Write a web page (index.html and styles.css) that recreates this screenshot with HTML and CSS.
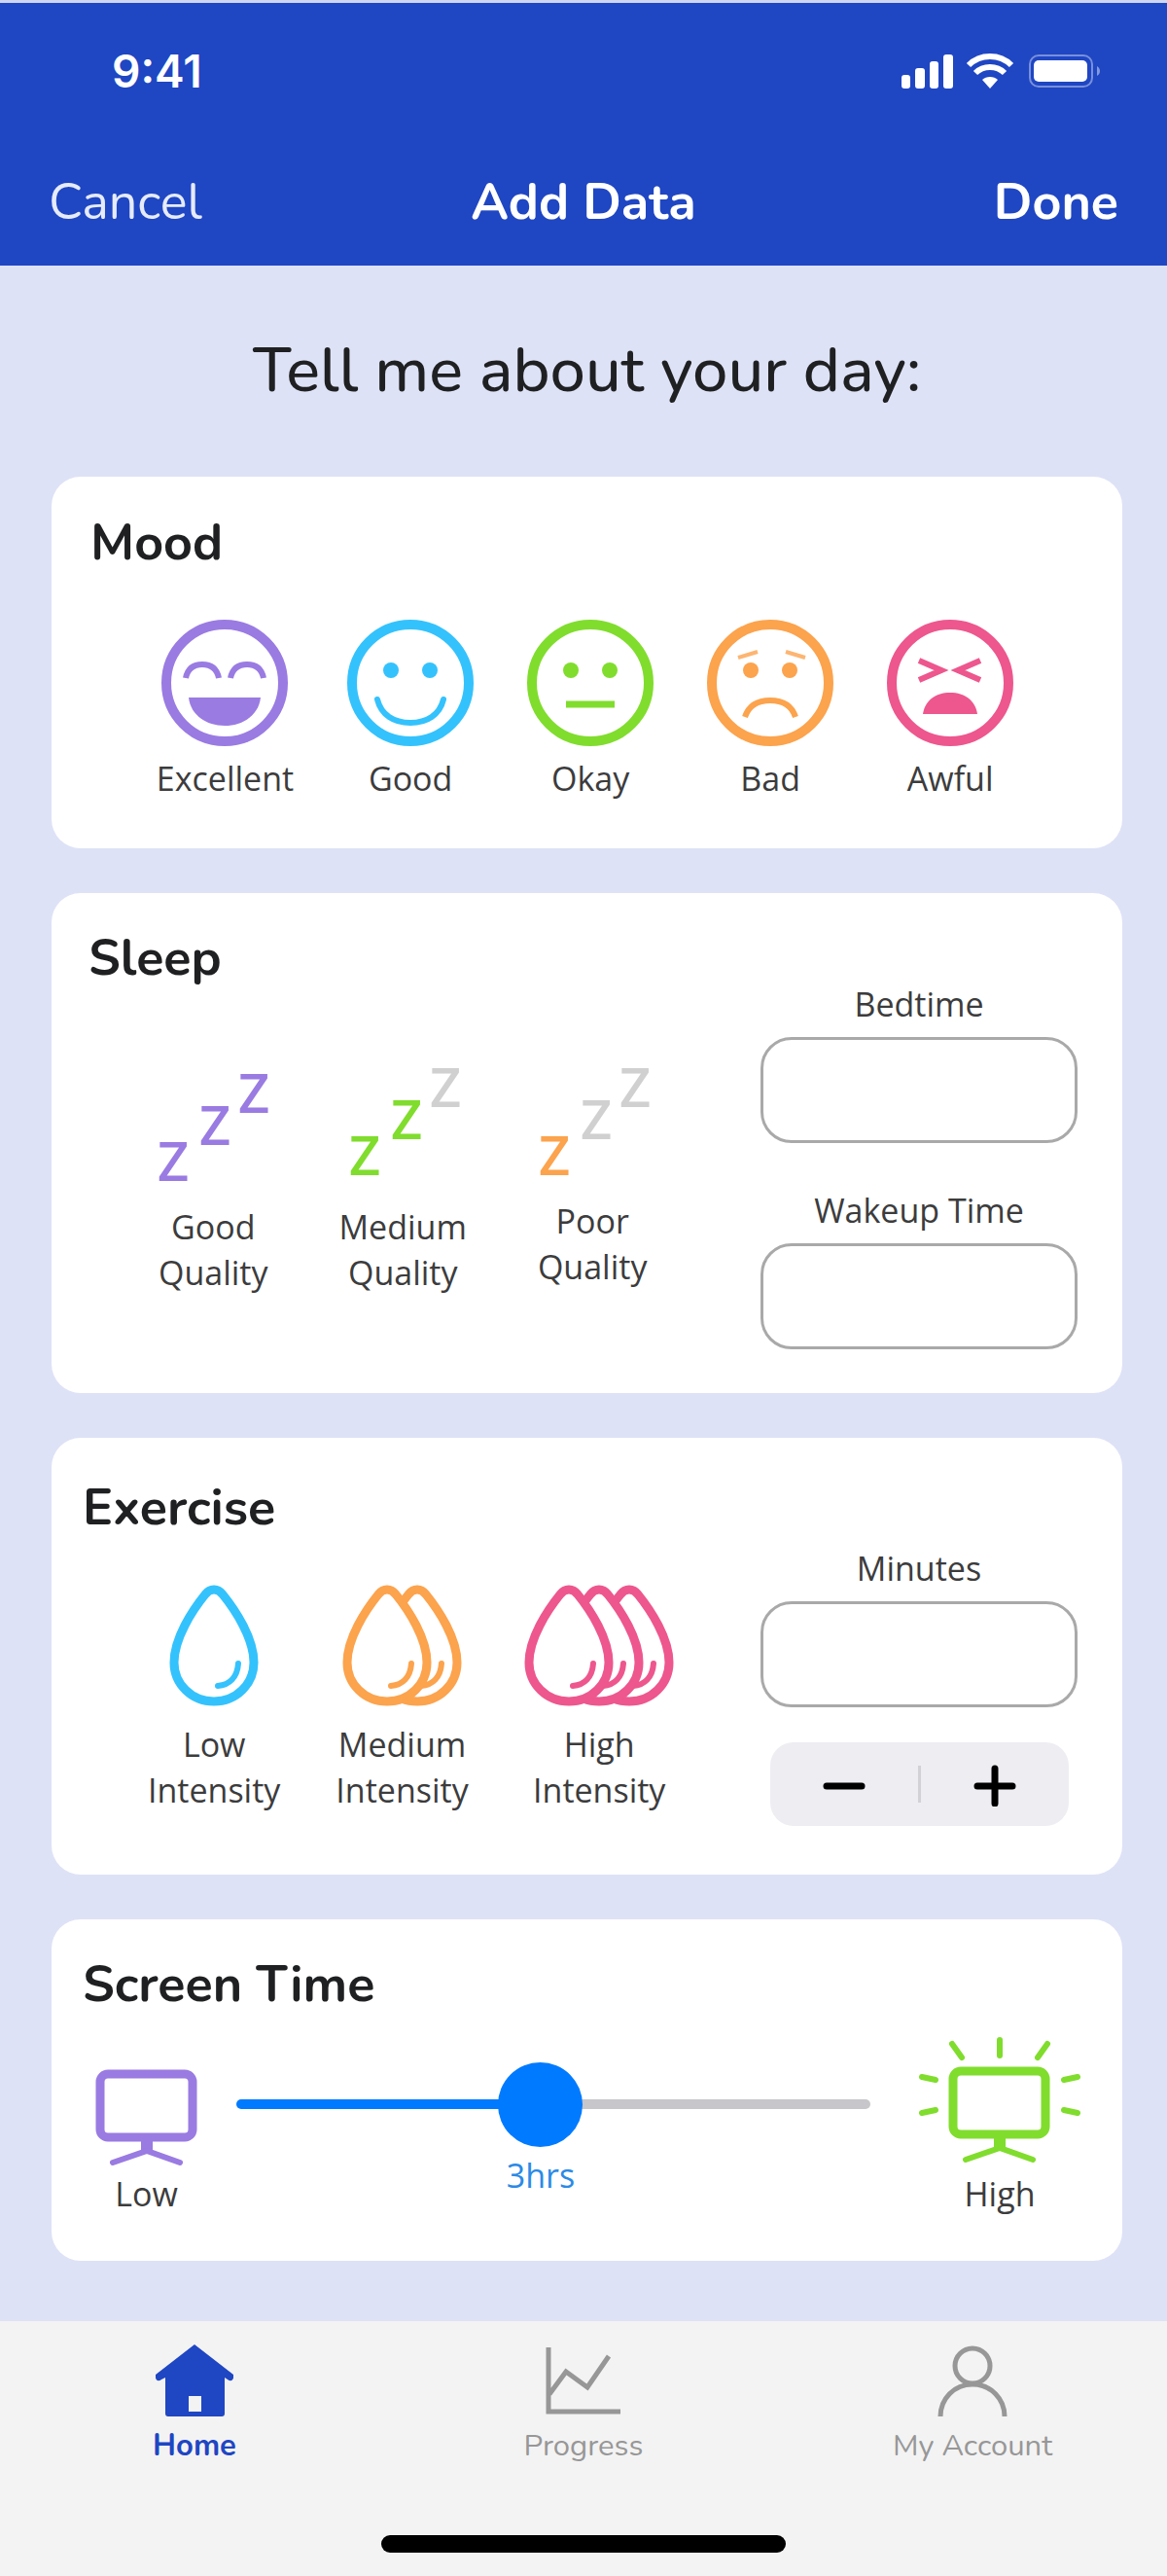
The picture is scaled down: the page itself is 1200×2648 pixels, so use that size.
FILE: index.html
```html
<!DOCTYPE html>
<html lang="en">
<head>
<meta charset="utf-8">
<meta name="viewport" content="width=device-width, initial-scale=1">
<title>Add Data</title>
<link rel="stylesheet" href="styles.css">
</head>
<body>
<svg class="defs" width="0" height="0" aria-hidden="true">
  <symbol id="drop" viewBox="0 0 92 125" overflow="visible">
    <path d="M46 5C43 5 40 6 37 10C24 26 5 55 5 80C5 102 23 120 46 120C69 120 87 102 87 80C87 55 68 26 55 10C52 6 49 5 46 5Z" fill="#fff" stroke="currentColor" stroke-width="9"/>
    <path d="M71 81C70 95 62 103 50 104" fill="none" stroke="currentColor" stroke-width="6" stroke-linecap="round"/>
  </symbol>
  <symbol id="monitor" viewBox="0 0 105 100">
    <rect x="5" y="5" width="95" height="65" rx="8" fill="none" stroke="currentColor" stroke-width="9"/>
    <path d="M53 72V86" stroke="currentColor" stroke-width="12"/>
    <path d="M18 96L53 84L87 96" fill="none" stroke="currentColor" stroke-width="6" stroke-linecap="round"/>
  </symbol>
</svg>

<header class="top">
  <div class="status">
    <span class="clock">9:41</span>
    <svg class="status-icons" width="206" height="40" viewBox="0 0 206 40" aria-hidden="true">
      <g fill="#fff">
        <rect x="1" y="24" width="9" height="14" rx="3"/>
        <rect x="15" y="17" width="10" height="21" rx="3"/>
        <rect x="30" y="10" width="9" height="28" rx="3"/>
        <rect x="44" y="3" width="10" height="35" rx="3"/>
        <path d="M92 38L84 29C88 25 96 25 100 29Z"/>
        <rect x="137" y="9" width="55" height="22" rx="5"/>
        <path d="M202 15C206 17 206 23 202 25Z" opacity=".45"/>
      </g>
      <path d="M77 22C85 14 99 14 107 22M70 14C82 2 102 2 114 14" fill="none" stroke="#fff" stroke-width="6"/>
      <rect x="133" y="4" width="64" height="32" rx="9" fill="none" stroke="#fff" stroke-width="2" opacity=".4"/>
    </svg>
  </div>
  <nav class="bar">
    <button class="bar-btn" type="button">Cancel</button>
    <h1 class="bar-title">Add Data</h1>
    <button class="bar-btn bar-btn-done" type="button">Done</button>
  </nav>
</header>

<main class="content">
  <h2 class="prompt">Tell me about your day:</h2>

  <section class="card card-mood">
    <h3 class="card-title">Mood</h3>
    <div class="moods">
      <button class="option purple" type="button">
        <svg width="130" height="130" viewBox="0 0 130 130" fill="none" stroke="currentColor" aria-hidden="true">
          <circle cx="65" cy="65" r="60" stroke-width="10"/>
          <path d="M25 60C27 50 33 46 42 46S57 50 59 60M71 60C73 50 79 46 88 46S103 50 105 60" stroke-width="6"/>
          <path d="M28 80H102C100 98 84 109 65 109S30 98 28 80Z" fill="currentColor" stroke="none"/>
        </svg>
        <span>Excellent</span>
      </button>
      <button class="option blue" type="button">
        <svg width="130" height="130" viewBox="0 0 130 130" fill="none" stroke="currentColor" aria-hidden="true">
          <circle cx="65" cy="65" r="60" stroke-width="10"/>
          <g fill="currentColor" stroke="none"><circle cx="45" cy="52" r="8"/><circle cx="85" cy="52" r="8"/></g>
          <path d="M31 82C35 98 48 106 65 106S95 98 99 82" stroke-width="6" stroke-linecap="round"/>
        </svg>
        <span>Good</span>
      </button>
      <button class="option green" type="button">
        <svg width="130" height="130" viewBox="0 0 130 130" fill="none" stroke="currentColor" aria-hidden="true">
          <circle cx="65" cy="65" r="60" stroke-width="10"/>
          <g fill="currentColor" stroke="none"><circle cx="45" cy="52" r="8"/><circle cx="85" cy="52" r="8"/></g>
          <path d="M40 87H90" stroke-width="7"/>
        </svg>
        <span>Okay</span>
      </button>
      <button class="option orange" type="button">
        <svg width="130" height="130" viewBox="0 0 130 130" fill="none" stroke="currentColor" aria-hidden="true">
          <circle cx="65" cy="65" r="60" stroke-width="10"/>
          <g fill="currentColor" stroke="none"><circle cx="45" cy="52" r="8"/><circle cx="85" cy="52" r="8"/></g>
          <path d="M32 39L52 33M81 33L101 39" stroke-width="4" opacity=".8"/>
          <path d="M39 100C43 88 53 83 65 83S87 88 91 100" stroke-width="6"/>
        </svg>
        <span>Bad</span>
      </button>
      <button class="option pink" type="button">
        <svg width="130" height="130" viewBox="0 0 130 130" fill="none" stroke="currentColor" aria-hidden="true">
          <circle cx="65" cy="65" r="60" stroke-width="10"/>
          <path d="M33 42L56 52L33 62M96 42L73 52L96 62" stroke-width="6"/>
          <path d="M37 97C39 83 50 75 65 75S91 83 93 97Z" fill="currentColor" stroke="none"/>
        </svg>
        <span>Awful</span>
      </button>
    </div>
  </section>

  <section class="card card-split card-sleep">
    <div>
      <h3 class="card-title">Sleep</h3>
      <div class="qualities">
        <button class="option option-low" type="button">
          <svg class="zzz" width="112" height="112" viewBox="0 0 112 112" aria-hidden="true">
            <g class="fill-purple"><text x="-1" y="112">Z</text><text x="42" y="75">Z</text><text x="82" y="42">Z</text></g>
          </svg>
          <span>Good<br>Quality</span>
        </button>
        <button class="option" type="button">
          <svg class="zzz" width="112" height="118" viewBox="0 0 112 118" aria-hidden="true">
            <g class="fill-green"><text x="1" y="112">Z</text><text x="44" y="75">Z</text></g>
            <text class="fill-off" x="84" y="42">Z</text>
          </svg>
          <span>Medium<br>Quality</span>
        </button>
        <button class="option" type="button">
          <svg class="zzz" width="112" height="112" viewBox="0 0 112 112" aria-hidden="true">
            <text class="fill-orange" x="1" y="112">Z</text>
            <g class="fill-off"><text x="44" y="75">Z</text><text x="84" y="42">Z</text></g>
          </svg>
          <span>Poor<br>Quality</span>
        </button>
      </div>
    </div>
    <div class="fields">
      <div class="field">
        <label for="bedtime">Bedtime</label>
        <input id="bedtime" type="text">
      </div>
      <div class="field">
        <label for="wakeup">Wakeup Time</label>
        <input id="wakeup" type="text">
      </div>
    </div>
  </section>

  <section class="card card-split card-exercise">
    <div>
      <h3 class="card-title">Exercise</h3>
      <div class="intensities">
        <button class="option blue" type="button">
          <svg width="92" height="125" viewBox="0 0 92 125" aria-hidden="true">
            <use href="#drop" width="92" height="125"/>
          </svg>
          <span>Low<br>Intensity</span>
        </button>
        <button class="option orange" type="button">
          <svg width="124" height="125" viewBox="0 0 124 125" aria-hidden="true">
            <use href="#drop" x="31" width="92" height="125"/>
            <use href="#drop" width="92" height="125"/>
          </svg>
          <span>Medium<br>Intensity</span>
        </button>
        <button class="option pink" type="button">
          <svg width="155" height="125" viewBox="0 0 155 125" aria-hidden="true">
            <use href="#drop" x="62" width="92" height="125"/>
            <use href="#drop" x="31" width="92" height="125"/>
            <use href="#drop" width="92" height="125"/>
          </svg>
          <span>High<br>Intensity</span>
        </button>
      </div>
    </div>
    <div class="fields">
      <div class="field">
        <label for="minutes">Minutes</label>
        <input id="minutes" type="text" inputmode="numeric">
      </div>
      <div class="stepper">
        <button type="button" aria-label="Decrease minutes">
          <svg width="44" height="44" viewBox="0 0 44 44" stroke="#000" stroke-width="7" stroke-linecap="round" aria-hidden="true"><path d="M4 24H40"/></svg>
        </button>
        <span class="stepper-divider"></span>
        <button type="button" aria-label="Increase minutes">
          <svg width="44" height="46" viewBox="0 0 44 46" stroke="#000" stroke-width="7" stroke-linecap="round" aria-hidden="true"><path d="M4 25H40M22 7V43"/></svg>
        </button>
      </div>
    </div>
  </section>

  <section class="card card-screen">
    <h3 class="card-title">Screen Time</h3>
    <div class="screen-row">
      <div class="level purple">
        <svg width="105" height="100" viewBox="0 0 105 100" aria-hidden="true"><use href="#monitor" width="105" height="100"/></svg>
        <span>Low</span>
      </div>
      <div class="slider">
        <input id="screen-time" type="range" min="0" max="6.3" step="0.1" value="3" aria-label="Screen time in hours">
        <output for="screen-time" style="width: 96%">3hrs</output>
      </div>
      <div class="level green">
        <svg width="168" height="134" viewBox="0 0 168 134" fill="none" stroke="currentColor" aria-hidden="true">
          <use href="#monitor" x="31" y="31" width="105" height="100" stroke="none"/>
          <path d="M84 4V20M35 8L45 22M133 8L123 22M4 42L18 45M164 42L150 45M4 79L18 76M164 79L150 76" stroke-width="6" stroke-linecap="round"/>
        </svg>
        <span>High</span>
      </div>
    </div>
  </section>
</main>

<footer class="tabbar">
  <nav class="tabs">
    <a class="tab tab-active" href="#home" aria-current="page">
      <svg width="80" height="74" viewBox="0 0 80 74" aria-hidden="true">
        <path d="M40 0L80 31C81 36 78 39 74 36L71 34V71Q71 74 68 74H13Q10 74 10 71V34L6 36C2 39 -1 36 0 31Z" fill="currentColor"/>
        <rect x="34" y="53" width="13" height="16" fill="#f3f3f3"/>
      </svg>
      <span>Home</span>
    </a>
    <a class="tab" href="#progress">
      <svg width="78" height="74" viewBox="0 0 78 74" fill="none" stroke="currentColor" stroke-width="5" aria-hidden="true">
        <path d="M3 3V69H77M4 51L21 28L43 44L65 12"/>
      </svg>
      <span>Progress</span>
    </a>
    <a class="tab" href="#account">
      <svg width="74" height="74" viewBox="0 0 74 74" fill="none" stroke="currentColor" stroke-width="5" aria-hidden="true">
        <circle cx="37" cy="22" r="18"/>
        <path d="M4 74C4 56 18 41 37 41S70 56 70 74"/>
      </svg>
      <span>My Account</span>
    </a>
  </nav>
  <div class="home-indicator"></div>
</footer>
</body>
</html>
```
FILE: styles.css
```css
* { box-sizing: border-box; }

body {
  margin: 0;
  background: #dee2f6;
  color: #1f2022;
  font-family: "Open Sans", sans-serif;
  font-size: 34px;
  line-height: 47px;
}

h1, h2, h3 { margin: 0; }

h2, h3, .bar, .tabs { font-family: Nunito, "Open Sans", sans-serif; }

button {
  margin: 0;
  padding: 0;
  border: 0;
  background: none;
  color: inherit;
  font: inherit;
  cursor: pointer;
}

svg { display: block; }
.defs { position: absolute; }

.purple { color: #9a7be2; }
.blue { color: #34c2fd; }
.green { color: #80dd2d; }
.orange { color: #fca34d; }
.pink { color: #ed578d; }
.fill-purple { fill: #9a7be2; }
.fill-green { fill: #80dd2d; }
.fill-orange { fill: #fca34d; }
.fill-off { fill: #d0d0d0; }

/* Header */
.top {
  border-top: 3px solid #cfd6f1;
  background: #1f46c3;
  color: #fff;
}

.status {
  display: flex;
  align-items: center;
  justify-content: space-between;
  height: 140px;
  padding: 0 68px 0 115px;
}

.clock {
  font-family: Inter, sans-serif;
  font-size: 46px;
  font-weight: 600;
}

.bar {
  display: grid;
  grid-template-columns: 1fr auto 1fr;
  align-items: center;
  height: 130px;
  padding: 0 50px;
}

.bar-btn {
  justify-self: start;
  color: #e6ebfa;
  font-size: 52px;
  line-height: 64px;
}

.bar-btn-done {
  justify-self: end;
  color: #fff;
  font-weight: 700;
}

.bar-title {
  font-size: 52px;
  font-weight: 700;
  line-height: 64px;
}

/* Form */
.content {
  display: flex;
  flex-direction: column;
  gap: 46px;
  padding: 0 46px 62px 53px;
}

.prompt {
  padding: 68px 0 23px;
  font-size: 65px;
  font-weight: 500;
  line-height: 80px;
  text-align: center;
}

.card {
  border-radius: 30px;
  background: #fff;
}

.card-mood { padding: 36px 44px 48px 40px; }
.card-sleep { padding: 35px 46px 45px 38px; }
.card-exercise { padding: 40px 46px 50px 32px; }
.card-screen { padding: 35px 42px 45px 32px; }

.card-split {
  display: flex;
  justify-content: space-between;
}

.card-title {
  font-size: 52px;
  font-weight: 700;
  line-height: 64px;
}

.moods {
  display: flex;
  justify-content: center;
  gap: 55px;
  margin-top: 47px;
}

.option {
  display: flex;
  flex-direction: column;
  align-items: center;
  gap: 10px;
}

.option span, .level span, .field label { color: #3c3c3d; }

.qualities {
  display: flex;
  align-items: flex-start;
  gap: 73px;
  margin-top: 79px;
  padding-left: 72px;
}

.qualities .option { gap: 24px; }
.qualities .option-low { align-self: flex-end; }

.zzz {
  overflow: visible;
  font-size: 56px;
  font-weight: 600;
}

.intensities {
  display: flex;
  gap: 57px;
  margin-top: 47px;
  padding-left: 67px;
}

.intensities .option { gap: 16px; }

.fields {
  display: flex;
  flex-direction: column;
  flex: 0 0 326px;
}

.card-sleep .fields {
  gap: 46px;
  padding-top: 56px;
}

.card-exercise .fields {
  gap: 36px;
  padding-top: 71px;
}

.field {
  display: flex;
  flex-direction: column;
  gap: 10px;
  text-align: center;
}

.field input {
  width: 100%;
  height: 109px;
  padding: 0 24px;
  border: 3px solid #a9a9a9;
  border-radius: 32px;
  background: #fff;
  font: inherit;
  text-align: center;
}

.stepper {
  display: flex;
  align-items: center;
  align-self: center;
  width: 307px;
  height: 86px;
  border-radius: 24px;
  background: #eeedf2;
}

.stepper button {
  display: flex;
  flex: 1;
  align-items: center;
  align-self: stretch;
  justify-content: center;
}

.stepper-divider {
  width: 3px;
  height: 38px;
  background: #d2d1d6;
}

.screen-row {
  display: flex;
  align-items: flex-end;
  margin-top: 21px;
  padding-left: 13px;
}

.level {
  display: flex;
  flex-direction: column;
  align-items: center;
  gap: 5px;
}

.slider {
  flex: 1;
  margin: 0 49px 19px 40px;
}

.slider input {
  display: block;
  width: 100%;
  height: 87px;
  margin: 0 0 7px;
  appearance: none;
  background: none;
}

.slider input::-webkit-slider-runnable-track {
  height: 10px;
  border-radius: 5px;
  background: linear-gradient(to right, #007aff 48%, #c6c6cb 48%);
}

.slider input::-webkit-slider-thumb {
  width: 87px;
  height: 87px;
  margin-top: -38px;
  appearance: none;
  border-radius: 50%;
  background: #007aff;
}

.slider output {
  display: block;
  color: #2b8ae6;
  text-align: center;
}

/* Tab bar */
.tabbar {
  padding: 24px 0;
  background: #f3f3f3;
}

.tabs {
  display: grid;
  grid-template-columns: repeat(3, 1fr);
}

.tab {
  display: flex;
  flex-direction: column;
  align-items: center;
  gap: 10px;
  color: #979797;
  font-size: 31px;
  line-height: 40px;
  text-decoration: none;
}

.tab-active {
  color: #1f46c3;
  font-weight: 700;
}

.home-indicator {
  width: 416px;
  height: 18px;
  margin: 72px auto 0;
  border-radius: 9px;
  background: #000;
}
```
